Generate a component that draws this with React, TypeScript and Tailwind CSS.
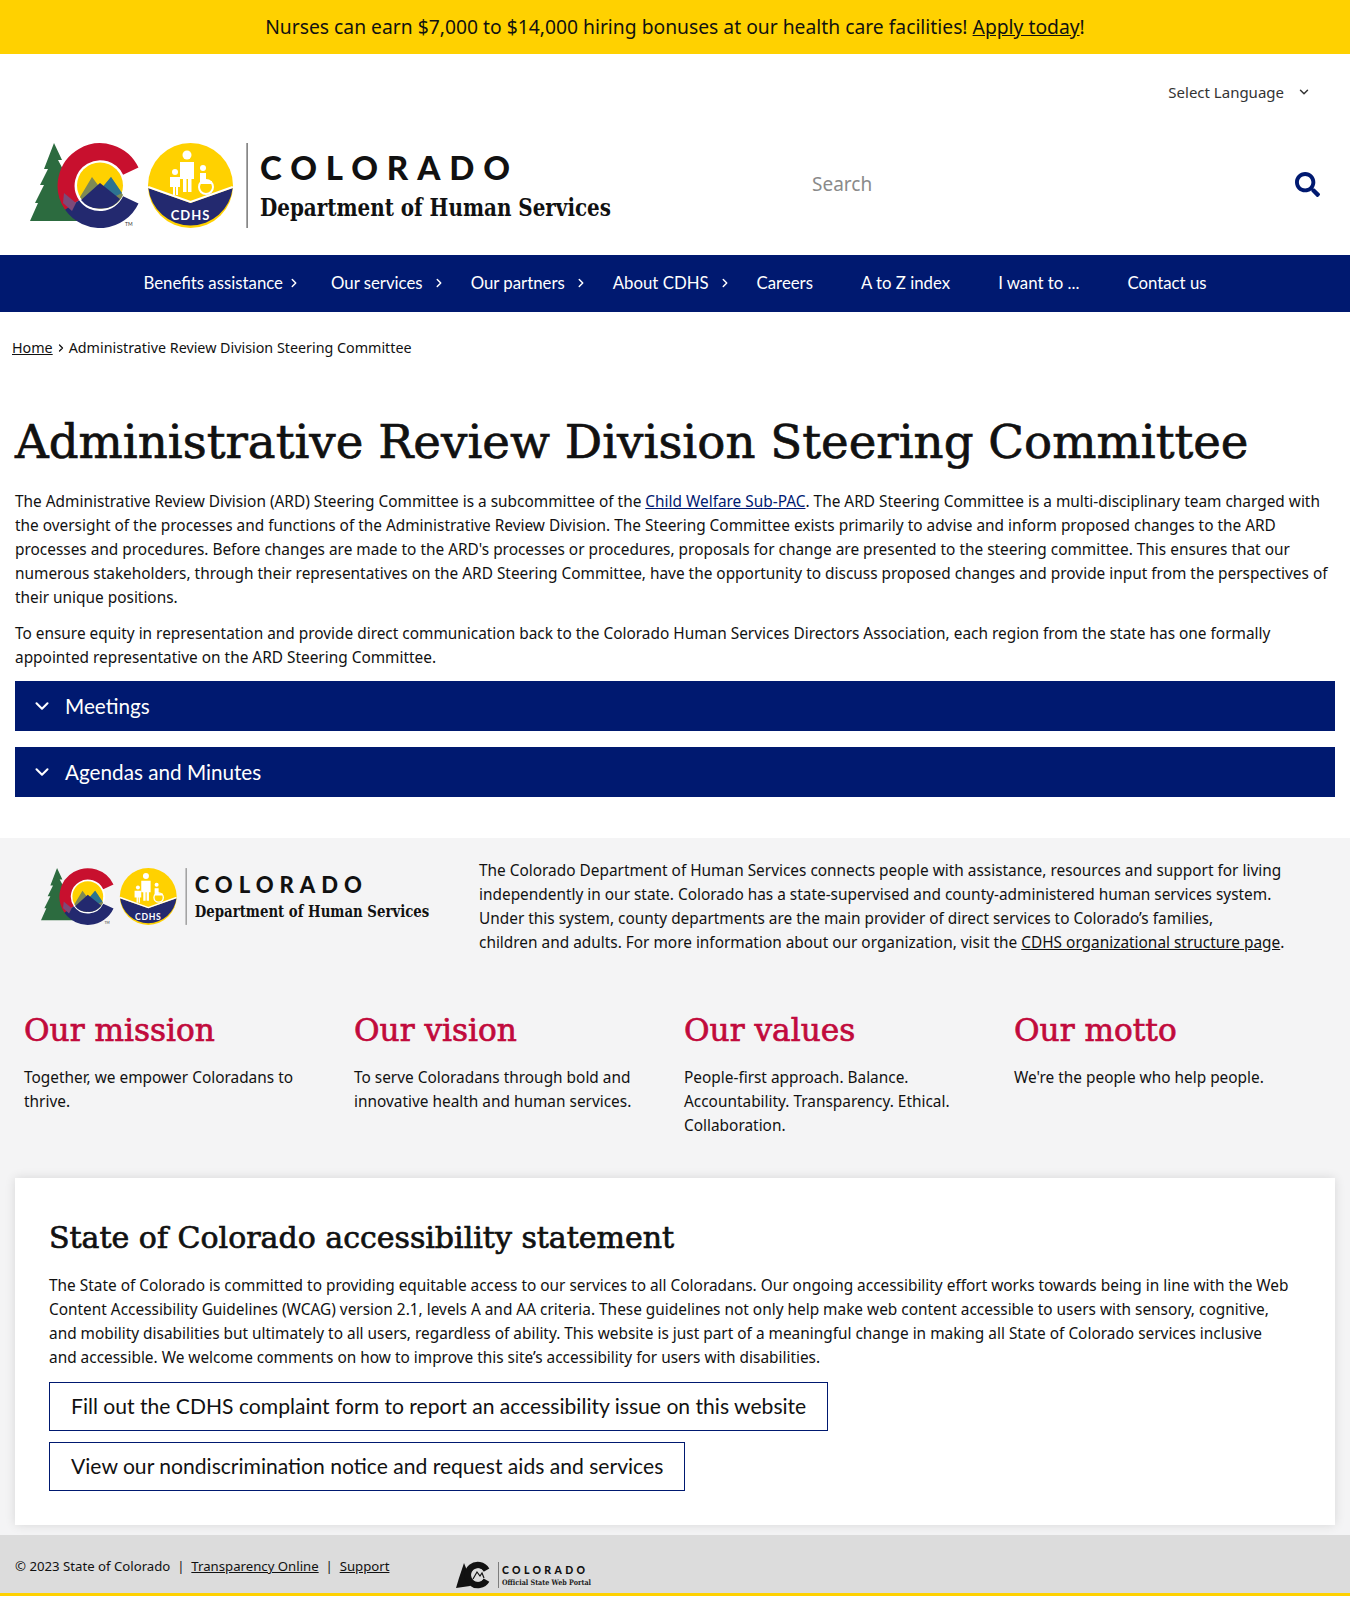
import { ChevronDown, ChevronRight } from "lucide-react";
import { FaSearch } from "react-icons/fa";

const body = "font-['Noto_Sans',sans-serif]";
const slab = "font-['DejaVu_Serif',serif] [-webkit-text-stroke:0.7px]";
const museo = "font-['Lato',sans-serif]";

const navItems = [
    { label: "Benefits assistance", chevron: "ml-[4px] -mr-[18px]" },
    { label: "Our services", chevron: "ml-[9px] -mr-[23px]" },
    { label: "Our partners", chevron: "ml-[9px] -mr-[23px]" },
    { label: "About CDHS", chevron: "ml-[9px] -mr-[23px]" },
    { label: "Careers" },
    { label: "A to Z index" },
    { label: "I want to ..." },
    { label: "Contact us" },
];

const columns = [
    { title: "Our mission", text: "Together, we empower Coloradans to thrive." },
    { title: "Our vision", text: "To serve Coloradans through bold and innovative health and human services." },
    { title: "Our values", text: "People-first approach. Balance. Accountability. Transparency. Ethical. Collaboration." },
    { title: "Our motto", text: "We're the people who help people." },
];

function Logo({ className }: { className: string }) {
    return (
        <svg viewBox="0 0 582 85" className={className} role="img" aria-label="Colorado Department of Human Services">
            <polygon points="24,0 32,17 28,17 36,32 31,32 40,48 35,48 48,78 0,78 8,60 5,60 14,42 10,42 18,26 14,26" fill="#2c6b3f" />
            <circle cx="70" cy="42.5" r="26" fill="#fff" />
            <path d="M100.8 28.1A34 34 0 1 0 42.1 62" fill="none" stroke="#c8102e" strokeWidth="17" />
            <path d="M42.1 62A34 34 0 0 0 100.8 56.9" fill="none" stroke="#23296f" strokeWidth="17" />
            <path d="M34 50L46 60L42 68L33 60Z" fill="#7c4a79" />
            <circle cx="70" cy="42.5" r="23" fill="#ffd100" />
            <path d="M50 54L62 34L71 46L81 34L93 52A23 23 0 0 1 70 65.5A23 23 0 0 1 50 54Z" fill="#7e8a55" />
            <path d="M71 46L81 34L92 50L80 56Z" fill="#2d7391" />
            <path d="M51 57L70 40L90 56A23 23 0 0 1 70 65.5A23 23 0 0 1 51 57Z" fill="#23296f" />
            <text x="95" y="83" fontSize="5" fill="#333" fontFamily="Lato, sans-serif">TM</text>

            <circle cx="160.5" cy="42.5" r="42.5" fill="#ffd100" />
            <path d="M118.3 45L160.5 60L202.7 45A42.5 42.5 0 0 1 118.3 45Z" fill="#23296f" />
            <path d="M118.3 44L160.5 59L202.7 44" fill="none" stroke="#fff" strokeWidth="2" />
            <g fill="#fff">
                <circle cx="157" cy="12" r="4.5" />
                <path d="M150 19h14v17h-2.5v13h-3.5v-13h-1.5v13h-3.5v-13h-3z" />
                <circle cx="145" cy="29" r="3" />
                <path d="M140 34h10v10h-2v8h-2v-8h-1v8h-2v-8h-3z" />
                <circle cx="173" cy="25" r="3" />
                <path d="M170 30h6v8h6v3h-12z" />
            </g>
            <circle cx="176" cy="44" r="7" fill="none" stroke="#fff" strokeWidth="2" />
            <text x="160.5" y="77" textAnchor="middle" fontSize="13" fontWeight="700" letterSpacing="1" fill="#fff" fontFamily="Lato, sans-serif">CDHS</text>

            <rect x="216.5" y="0" width="1.2" height="85" fill="#555" />
            <text x="230" y="37" fontSize="33" fontWeight="900" fill="#111" fontFamily="Lato, sans-serif" textLength="250" lengthAdjust="spacing">COLORADO</text>
            <text x="230" y="73" fontSize="24" fontWeight="700" fill="#111" fontFamily="'DejaVu Serif', serif" textLength="351" lengthAdjust="spacingAndGlyphs">Department of Human Services</text>
        </svg>
    );
}

function PortalLogo() {
    return (
        <svg viewBox="0 0 136 28" className="w-[136px] h-[28px]" role="img" aria-label="Colorado Official State Web Portal">
            <polygon points="8,2 12,12 14,25 0,27 3,17" fill="#111" />
            <path d="M30.5 9A10 10 0 1 0 30.5 19" fill="none" stroke="#111" strokeWidth="6.5" />
            <circle cx="22" cy="14" r="6.5" fill="#dcdcdc" />
            <path d="M17 18L21 11L24 15L26 12L28 17" fill="none" stroke="#111" strokeWidth="1.2" />
            <rect x="42" y="1" width="0.8" height="26" fill="#666" />
            <text x="46" y="13" fontSize="10.5" fontWeight="900" fill="#111" fontFamily="Lato, sans-serif" textLength="83" lengthAdjust="spacing">COLORADO</text>
            <text x="46" y="24" fontSize="7.5" fontWeight="700" fill="#222" fontFamily="'DejaVu Serif', serif" textLength="89" lengthAdjust="spacingAndGlyphs">Official State Web Portal</text>
        </svg>
    );
}

function Accordion({ label }: { label: string }) {
    return (
        <div className={`flex items-center h-[50px] bg-[#001970] text-white text-[20.7px] pl-4 ${museo}`}>
            <ChevronDown size={22} strokeWidth={2.25} className="mr-[12px]" />
            {label}
        </div>
    );
}

export default function App() {
    return (
        <div className={`w-[1350px] bg-white text-[#111] text-[15.4px] leading-6 ${body}`}>
            <div className="h-[54px] flex items-center justify-center bg-[#ffd100] text-[19.3px]">
                <p>Nurses can earn $7,000 to $14,000 hiring bonuses at our health care facilities! <a className="underline">Apply today</a>!</p>
            </div>

            <div className="flex justify-end pt-[26px] pr-[39px] text-[#333] text-[15px]">
                <div className="flex items-center">
                    Select Language
                    <ChevronDown size={14} strokeWidth={2.5} className="ml-[13px]" />
                </div>
            </div>

            <div className="flex items-center mt-[39px] pl-[30px] pr-[30px] h-[85px]">
                <Logo className="w-[582px] h-[85px] shrink-0" />
                <div className="ml-[200px] mb-[3px] flex-1 text-[19px] text-[#8a8a8a]">Search</div>
                <FaSearch size={25} className="mb-[2px] text-[#001970]" />
            </div>

            <nav className={`flex justify-center h-[57px] mt-[27px] pb-[1px] bg-[#001970] text-white text-[16.8px] ${museo}`}>
                {navItems.map((item) => (
                    <a key={item.label} className="flex items-center px-6">
                        {item.label}
                        {item.chevron && <ChevronRight size={14} strokeWidth={2.5} className={item.chevron} />}
                    </a>
                ))}
            </nav>

            <div className="flex items-center h-[24px] mt-6 pl-3 text-[14.3px]">
                <a className="underline">Home</a>
                <ChevronRight size={12} strokeWidth={2.5} className="mx-[2px]" />
                Administrative Review Division Steering Committee
            </div>

            <main className="px-[15px]">
                <h1 className={`mt-[52px] mb-[18px] text-[46.7px] leading-[60px] ${slab}`}>
                    Administrative Review Division Steering Committee
                </h1>
                <p>
                    The Administrative Review Division (ARD) Steering Committee is a subcommittee of the <a className="underline text-[#001970]">Child Welfare Sub-PAC</a>. The ARD Steering Committee is a multi-disciplinary team charged with the oversight of the processes and functions of the Administrative Review Division. The Steering Committee exists primarily to advise and inform proposed changes to the ARD processes and procedures. Before changes are made to the ARD's processes or procedures, proposals for change are presented to the steering committee. This ensures that our numerous stakeholders, through their representatives on the ARD Steering Committee, have the opportunity to discuss proposed changes and provide input from the perspectives of their unique positions.
                </p>
                <p className="mt-3">
                    To ensure equity in representation and provide direct communication back to the Colorado Human Services Directors Association, each region from the state has one formally appointed representative on the ARD Steering Committee.
                </p>
                <div className="flex flex-col gap-[16px] mt-[11px]">
                    <Accordion label="Meetings" />
                    <Accordion label="Agendas and Minutes" />
                </div>
            </main>

            <footer className="mt-[41px] bg-[#f4f4f5]">
                <div className="flex pt-[21px] pl-[41px]">
                    <Logo className="w-[389px] h-[57px] mt-[9px] shrink-0" />
                    <p className="ml-[49px] w-[810px]">
                        The Colorado Department of Human Services connects people with assistance, resources and support for living independently in our state. Colorado has a state-supervised and county-administered human services system. Under this system, county departments are the main provider of direct services to Colorado’s families,<br />children and adults. For more information about our organization, visit the <a className="underline">CDHS organizational structure page</a>.
                    </p>
                </div>

                <div className="grid grid-cols-4 px-[15px] mt-[55px]">
                    {columns.map((col) => (
                        <div key={col.title} className="px-[9px] pr-[30px] h-[144px]">
                            <h2 className={`text-[31.2px] leading-10 text-[#c10a3c] ${slab}`}>{col.title}</h2>
                            <p className="mt-[16px]">{col.text}</p>
                        </div>
                    ))}
                </div>

                <section className="mx-[15px] mt-[24px] h-[347px] pl-[34px] pr-[44px] pt-[36px] bg-white shadow-[0_0_10px_rgba(0,0,0,0.12)]">
                    <h2 className={`text-[30px] leading-12 ${slab}`}>State of Colorado accessibility statement</h2>
                    <p className="mt-[12px]">
                        The State of Colorado is committed to providing equitable access to our services to all Coloradans. Our ongoing accessibility effort works towards being in line with the Web Content Accessibility Guidelines (WCAG) version 2.1, levels A and AA criteria. These guidelines not only help make web content accessible to users with sensory, cognitive, and mobility disabilities but ultimately to all users, regardless of ability. This website is just part of a meaningful change in making all State of Colorado services inclusive and accessible. We welcome comments on how to improve this site’s accessibility for users with disabilities.
                    </p>
                    <div className={`flex flex-col items-start gap-[11px] mt-[12px] text-[21.1px] ${museo}`}>
                        <a className="flex items-center h-[49px] px-[21px] pb-[2px] border border-[#001970]">Fill out the CDHS complaint form to report an accessibility issue on this website</a>
                        <a className="flex items-center h-[49px] px-[21px] pb-[2px] border border-[#001970]">View our nondiscrimination notice and request aids and services</a>
                    </div>
                </section>

                <div className="flex mt-[10px] h-[61px] pl-[15px] pt-[19px] bg-[#dcdcdc] border-b-[3px] border-[#ffd100] text-[13.2px]">
                    <div>
                        © 2023 State of Colorado&nbsp; | &nbsp;<a className="underline">Transparency Online</a>&nbsp; | &nbsp;<a className="underline">Support</a>
                    </div>
                    <div className="ml-[67px] mt-[7px]">
                        <PortalLogo />
                    </div>
                </div>
            </footer>
        </div>
    );
}
